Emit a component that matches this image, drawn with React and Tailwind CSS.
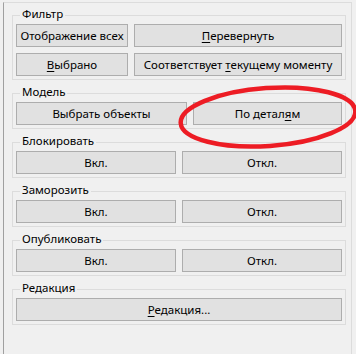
import React from "react";

const Btn = ({ children, className = "" }) => (
  <div
    className={`h-[23px] border border-[#adadad] bg-[#e1e1e1] flex items-center justify-center text-[11.5px] text-black whitespace-nowrap ${className}`}
  >
    <span>{children}</span>
  </div>
);

const U = ({ children }) => (
  <span className="underline underline-offset-[2px] decoration-1">{children}</span>
);

const Group = ({ title, children }) => (
  <div className="relative border border-[#dcdcdc] px-[3px] pt-[8px] pb-[3px]">
    <span className="absolute left-[7px] top-[-10px] px-[2px] bg-[#f0f0f0] text-[11.5px] leading-[16px] text-black">
      {title}
    </span>
    {children}
  </div>
);

const App = () => {
  return (
    <div
      className="relative w-[356px] h-[354px] overflow-hidden bg-[#f0f0f0] pt-[2px] pl-[3px]"
      style={{ fontFamily: '"Noto Sans", "Open Sans", sans-serif' }}
    >
      <div className="w-[349px] h-[352px] border-l border-t border-r border-l-[#a0a0a0] border-t-[#dcdcdc] border-r-[#dcdcdc] pl-[8px] pr-[5px] pt-[12px]">
        <div className="flex flex-col gap-[13px]">
          <Group title="Фильтр">
            <div className="flex flex-col gap-[6px]">
              <div className="flex gap-[6px]">
                <Btn className="w-[112px]">Отображение всех</Btn>
                <Btn className="flex-1">
                  <U>П</U>еревернуть
                </Btn>
              </div>
              <div className="flex gap-[6px]">
                <Btn className="w-[112px]">
                  <U>В</U>ыбрано
                </Btn>
                <Btn className="flex-1">
                  Соответствует <U>т</U>екущему моменту
                </Btn>
              </div>
            </div>
          </Group>

          <Group title="Модель">
            <div className="flex gap-[6px]">
              <Btn className="w-[171px]">Выбрать объекты</Btn>
              <Btn className="flex-1">
                По детал<U>я</U>м
              </Btn>
            </div>
          </Group>

          <Group title="Блокировать">
            <div className="flex gap-[6px]">
              <Btn className="flex-1">Вкл.</Btn>
              <Btn className="flex-1">Откл.</Btn>
            </div>
          </Group>

          <Group title="Заморозить">
            <div className="flex gap-[6px]">
              <Btn className="flex-1">Вкл.</Btn>
              <Btn className="flex-1">Откл.</Btn>
            </div>
          </Group>

          <Group title="Опубликовать">
            <div className="flex gap-[6px]">
              <Btn className="flex-1">Вкл.</Btn>
              <Btn className="flex-1">Откл.</Btn>
            </div>
          </Group>

          <Group title="Редакция">
            <Btn>
              <U>Р</U>едакция...
            </Btn>
          </Group>
        </div>
      </div>

      {/* red annotation ellipse */}
      <svg
        className="absolute left-0 top-0 pointer-events-none"
        width="356"
        height="354"
        viewBox="0 0 356 354"
      >
        <ellipse
          cx="268"
          cy="117"
          rx="87.5"
          ry="29"
          transform="rotate(-4 268 117)"
          fill="none"
          stroke="#ed1c24"
          strokeWidth="4.5"
        />
      </svg>
    </div>
  );
};

export default App;
